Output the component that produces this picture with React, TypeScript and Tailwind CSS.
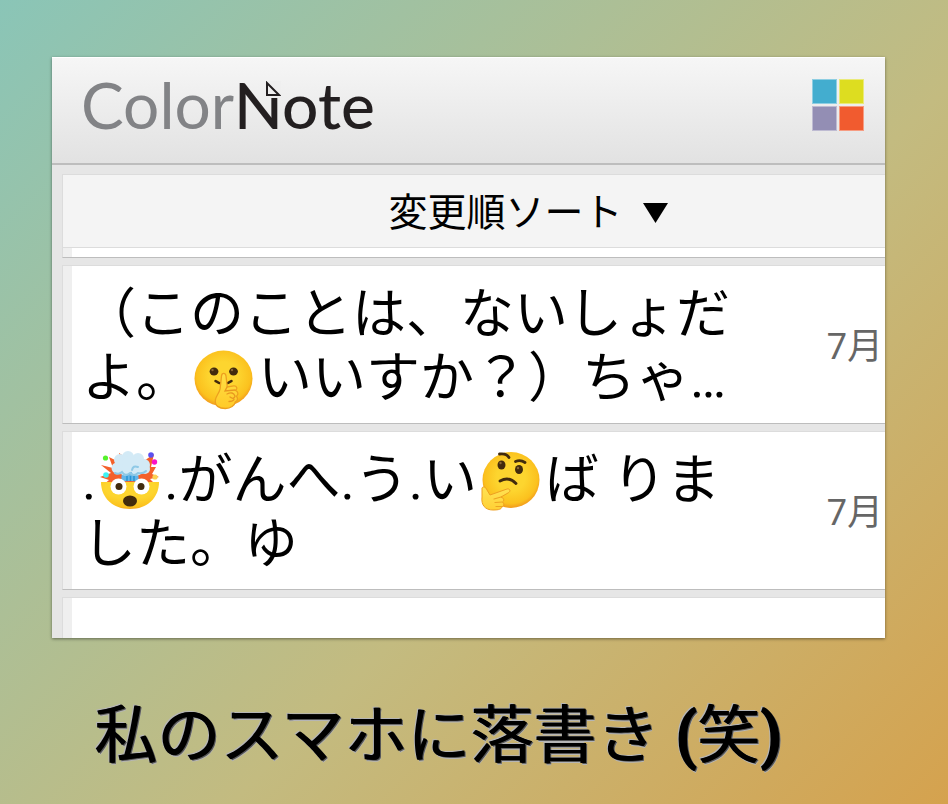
import type { ReactNode } from "react";

const ShushingFace = () => (
  <svg
    viewBox="0 0 60 60"
    role="img"
    aria-label="🤫"
    className="inline-block size-[60px] mx-1 align-[-13px]"
  >
    <defs>
      <radialGradient id="shushFace" cx="50%" cy="45%" r="55%">
        <stop offset="0.45" stopColor="#fdd52f" />
        <stop offset="0.85" stopColor="#fbc11e" />
        <stop offset="1" stopColor="#f29a1c" />
      </radialGradient>
      <linearGradient id="shushHand" x1="0" y1="0" x2="0" y2="1">
        <stop offset="0" stopColor="#ffdf45" />
        <stop offset="1" stopColor="#ffca28" />
      </linearGradient>
    </defs>
    <ellipse cx="29.500" cy="28.500" rx="29" ry="28" fill="url(#shushFace)" />
    <ellipse cx="20" cy="21.500" rx="4.400" ry="4" fill="#422b0d" />
    <ellipse cx="39.500" cy="21.500" rx="4.400" ry="4" fill="#422b0d" />
    <circle cx="18.500" cy="20" r="1.200" fill="#8a6735" />
    <circle cx="38" cy="20" r="1.200" fill="#8a6735" />
    <path d="M21.500 31q8 6 16 0" fill="none" stroke="#422b0d" strokeWidth="2.500" strokeLinecap="round" />
    <path
      d="M27.500 26c.4-3.500 4-3.500 4.500 0l1.300 11 6.500-1.200c3-.2 4.200 3 1.800 4.600 2.800 1.300 3 4.500.8 5.800 1.900 2 1.200 4.600-1 5.600-.8 3.500-4.600 6.700-10 6.700-6.500 0-10.900-2.800-10-8.600.5-4 3.700-6.400 4.700-11z"
      fill="url(#shushHand)"
      stroke="#eda01f"
      strokeWidth="1.300"
    />
    <path d="M33 37l-2 4 10-1M33 44q6-3 8 2-1 4-5 1M35 51.500q4 0 5-2" fill="none" stroke="#e9981f" strokeWidth="1.300" strokeLinecap="round" />
  </svg>
);

const ExplodingHead = () => (
  <svg
    viewBox="0 0 60 60"
    role="img"
    aria-label="🤯"
    className="inline-block size-[60px] mx-1 align-[-12px]"
  >
    <defs>
      <radialGradient id="blownFace" cx="50%" cy="20%" r="85%">
        <stop offset="0.5" stopColor="#fdd52f" />
        <stop offset="0.85" stopColor="#fbc11e" />
        <stop offset="1" stopColor="#ef9419" />
      </radialGradient>
    </defs>
    <path
      d="M1 14l12 3-4-11 10 5 0-9 9 6 13-5 0 9 13-9-3 13 5 0-4 7 7 3-9 2 7 7H2l7-6-9-3 11-4z"
      fill="#f4602a"
    />
    <path d="M1 31h58c0 16-12 27-29 27S1 47 1 31z" fill="url(#blownFace)" />
    <path d="M22 21h16l1 10q-9-2-18 0z" fill="#64b5e8" />
    <path d="M27 25v5M30.500 25v5M34 25v5" stroke="#2594d4" strokeWidth="1.500" />
    <g fill="#d3eaf6">
      <circle cx="17" cy="17" r="5.500" />
      <circle cx="20" cy="9" r="6" />
      <circle cx="28" cy="6" r="6" />
      <circle cx="38" cy="8" r="6" />
      <circle cx="44" cy="14" r="6" />
      <circle cx="45" cy="18" r="5" />
      <circle cx="37" cy="18" r="6.500" />
      <circle cx="25" cy="18" r="6.500" />
      <circle cx="30" cy="13" r="8" />
    </g>
    <path d="M15 22q4 2 7-1 3 5 8 1 4 4 8 0 5 1 8-2M32 19q1-5 6-3" fill="none" stroke="#8fc9e6" strokeWidth="2" strokeLinecap="round" />
    <circle cx="5.500" cy="7" r="2.600" fill="#55f22b" />
    <circle cx="51" cy="4" r="2.800" fill="#5b50f0" />
    <circle cx="54.500" cy="11" r="2.700" fill="#fb12c7" />
    <circle cx="6" cy="24" r="2.800" fill="#3df3f4" />
    <circle cx="55" cy="26" r="2.600" fill="#fbd154" />
    <circle cx="18.500" cy="35.500" r="8" fill="#fff" />
    <circle cx="41.500" cy="35.500" r="8" fill="#fff" />
    <circle cx="19" cy="35.500" r="3.500" fill="#422b0d" />
    <circle cx="41" cy="35.500" r="3.500" fill="#422b0d" />
    <ellipse cx="30" cy="50" rx="7" ry="5.500" fill="#422b0d" />
  </svg>
);

const ThinkingFace = () => (
  <svg
    viewBox="0 0 60 60"
    role="img"
    aria-label="🤔"
    className="inline-block size-[60px] mx-1 align-[-12px]"
  >
    <defs>
      <radialGradient id="thinkFace" cx="50%" cy="45%" r="55%">
        <stop offset="0.45" stopColor="#fdd52f" />
        <stop offset="0.85" stopColor="#fbc11e" />
        <stop offset="1" stopColor="#f29a1c" />
      </radialGradient>
      <linearGradient id="thinkHand" x1="0" y1="0" x2="0" y2="1">
        <stop offset="0" stopColor="#ffe356" />
        <stop offset="1" stopColor="#ffd034" />
      </linearGradient>
    </defs>
    <ellipse cx="30" cy="29" rx="28.500" ry="28" fill="url(#thinkFace)" />
    <ellipse cx="20.500" cy="14" rx="4" ry="4.500" fill="#422b0d" />
    <ellipse cx="38" cy="18.500" rx="4" ry="4.500" fill="#422b0d" />
    <circle cx="19.500" cy="12" r="1.200" fill="#8a6735" />
    <circle cx="37" cy="17" r="1.200" fill="#8a6735" />
    <path d="M18.500 3q7-1 9.500 3.500M34.500 10.500q5-2 9.500 1" fill="none" stroke="#422b0d" strokeWidth="2.800" strokeLinecap="round" />
    <path d="M19 30q9-5 16 2.500" fill="none" stroke="#422b0d" strokeWidth="2.800" strokeLinecap="round" />
    <path
      d="M1 37c1-2 4-1 5 2l3 5 17-6c3-.8 4 2.500 1.300 3.800L20 46c3 1 3.500 3.500 1.500 5 2 2 1.500 4-.5 4.700-.5 2.500-3 3.300-9 3.300C4 59 0 54 1 46z"
      fill="url(#thinkHand)"
      stroke="#ee9f20"
      strokeWidth="1"
    />
    <path d="M20 46l-7 2M21 51l-7 .5M21 55.500l-6 0" stroke="#eda321" strokeWidth="1.200" strokeLinecap="round" />
  </svg>
);

const Logo = () => (
  <h1 className="relative font-['Lato',sans-serif] text-[64px] leading-none whitespace-nowrap">
    <span className="text-[#828386]">Color</span>
    <span className="font-medium text-[#231f20]">Note</span>
    <svg viewBox="0 0 16 17" className="absolute left-[184px] top-[8px] w-4 h-[17px]" aria-hidden="true">
      <path d="M0 0h16v17H0z" fill="#efefef" />
      <path d="M2 2v12h12z" fill="none" stroke="#231f20" strokeWidth="2" />
    </svg>
  </h1>
);

type NoteProps = {
  lines: ReactNode[];
  date: string;
};

const Note = ({ lines, date }: NoteProps) => (
  <li className="flex items-center border-t border-b border-l border-t-[#dcdcdc] border-l-[#dcdcdc] border-b-[#bdbdbd] bg-white">
    <div className="w-[9px] self-stretch bg-[#efefef]" />
    <p className="flex-1 min-w-0 pl-[10px] pt-[17px] pb-3 text-[54px] leading-[64px] text-black whitespace-nowrap">
      {lines.map((line, index) => (
        <span key={index} className="block h-16">
          {line}
        </span>
      ))}
    </p>
    <time className="pr-0.5 pt-1 text-[36px] leading-[48px] text-[#666]">{date}</time>
  </li>
);

const notes: NoteProps[] = [
  {
    lines: [
      "（このことは、ないしょだ",
      <>よ。<ShushingFace />いいすか？）ちゃ…</>,
    ],
    date: "7月",
  },
  {
    lines: [
      <>.<ExplodingHead />.がんへ.う.い<ThinkingFace />ば りま</>,
      "した。ゆ",
    ],
    date: "7月",
  },
];

const App = () => {
  return (
    <main
      lang="ja"
      className="min-h-screen overflow-hidden pt-[57px] pl-[52px] pr-[63px] bg-[linear-gradient(135deg,#8ac5b7_0%,#c3bb80_59%,#d5a24e_100%)] font-['Roboto','Noto_Sans_CJK_JP',sans-serif]"
    >
      <section className="overflow-hidden bg-[#e6e6e6] shadow-[0_1px_3px_rgba(0,0,0,0.45)]">
        <header className="flex items-start justify-between h-[108px] pl-[29px] pr-[21px] pt-[15px] border-b-2 border-[#bdbdbd] border-t border-t-white bg-linear-to-b from-[#f6f6f6] to-[#e2e2e2]">
          <Logo />
          <button aria-label="Color" className="grid grid-cols-2 gap-0.5 mt-[6px] size-[52px]">
            <span className="border border-white/40 bg-[#43adcf]" />
            <span className="border border-white/40 bg-[#dddd20]" />
            <span className="border border-white/40 bg-[#938eb4]" />
            <span className="border border-white/40 bg-[#f15b2f]" />
          </button>
        </header>
        <div className="pl-[10px] pt-[9px]">
          <button className="flex w-full h-[74px] items-center justify-center gap-5 pl-27 pt-1 border border-r-0 border-[#dcdcdc] bg-[#f4f4f4] text-[39px] leading-none text-black">
            変更順ソート
            <svg viewBox="0 0 25 20" className="w-[25px] h-5" aria-hidden="true">
              <path d="M0 0h25L12.500 20z" />
            </svg>
          </button>
          <div className="h-[10px] border-b border-l border-b-[#bdbdbd] border-l-[#dcdcdc] bg-white">
            <div className="w-[9px] h-full bg-[#efefef]" />
          </div>
          <ul className="flex flex-col gap-[7px] pt-[7px]">
            {notes.map((note, index) => (
              <Note key={index} {...note} />
            ))}
            <li className="h-[41px] border-t border-l border-[#dcdcdc] bg-white">
              <div className="w-[9px] h-full bg-[#efefef]" />
            </li>
          </ul>
        </div>
      </section>
      <p className="pt-[54px] pl-[42px] text-[63px] leading-[88px] whitespace-nowrap text-black [text-shadow:1px_0_0_#000,2px_1px_0_#555,2px_2px_0_#b5b5b5,-1px_-1px_0_#b5b5b5]">
        私のスマホに落書き <b>(</b>笑<b>)</b>
      </p>
    </main>
  );
};

export default App;
